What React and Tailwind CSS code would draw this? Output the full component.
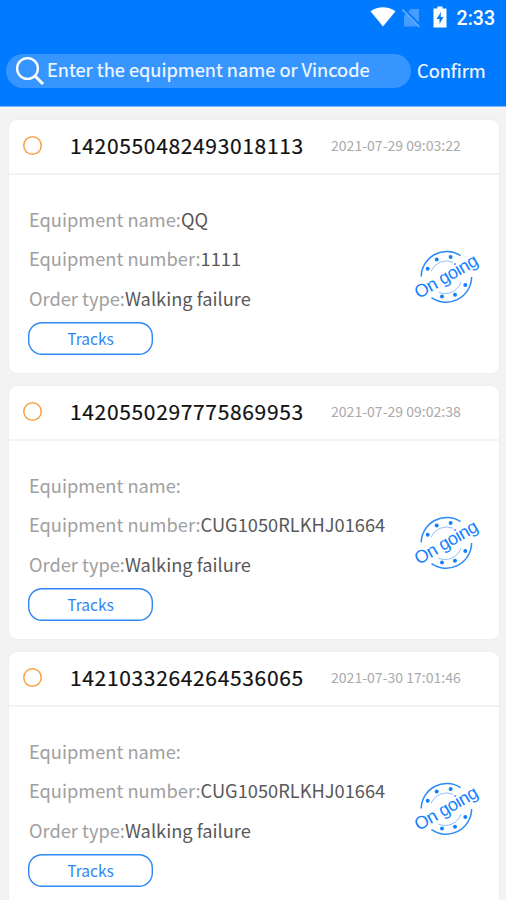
import { useState } from 'react';

const orders = [
  { id: '1420550482493018113', time: '2021-07-29 09:03:22', name: 'QQ', number: '1111', type: 'Walking failure' },
  { id: '1420550297775869953', time: '2021-07-29 09:02:38', name: '', number: 'CUG1050RLKHJ01664', type: 'Walking failure' },
  { id: '1421033264264536065', time: '2021-07-30 17:01:46', name: '', number: 'CUG1050RLKHJ01664', type: 'Walking failure' },
];

function StatusBar() {
  return (
    <div className="flex h-[36px] items-center justify-end pr-[11px] text-white">
      <svg className="-mt-[2px] h-[20px] w-[26px]" viewBox="0 0 26 20">
        <path d="M0.5 4.2C8 -1 18 -1 25.5 4.2L13 19.5Z" fill="white" />
      </svg>
      <svg className="-mt-[1px] ml-[6px] h-[20px] w-[19px]" viewBox="0 0 19 20">
        <path d="M9 1H17V18.5H2V8Z" fill="#479cff" />
        <path d="M1.5 0.5L19 18" stroke="#007aff" strokeWidth="2" />
        <path d="M0.5 1.5L17.5 19" stroke="#64abff" strokeWidth="1.6" />
      </svg>
      <svg className="-mt-[2px] ml-[12px] h-[22px] w-[14px]" viewBox="0 0 14 22">
        <path d="M4.5 0.5H9.5V2.5H13.5V21.5H0.5V2.5H4.5Z" fill="white" />
        <path d="M8 6L3.5 13H6.5V18L10.5 11H7.7Z" fill="#007aff" />
      </svg>
      <span className="mt-[1px] ml-[10px] font-[Roboto] text-[19.5px] leading-none font-medium">2:33</span>
    </div>
  );
}

function SearchBar() {
  return (
    <div className="flex h-[70px] items-start pt-[18px] pl-[6px] text-[#f2f8ff]">
      <div className="flex h-[34px] w-[405px] shrink-0 items-center rounded-full bg-[#3795ff]">
        <svg className="ml-[9px] h-[30px] w-[30px] shrink-0" viewBox="0 0 30 30" fill="none" stroke="white">
          <circle cx="12.5" cy="12.5" r="10.4" strokeWidth="2.3" />
          <path d="M20 20L28 28" strokeWidth="3" />
        </svg>
        <span className="-mt-[4px] ml-[2px] text-[18.25px] leading-[34px] whitespace-nowrap [-webkit-text-stroke:0.2px]">
          Enter the equipment name or Vincode
        </span>
      </div>
      <span className="-mt-[1px] ml-[6px] text-[18.25px] leading-[34px] [-webkit-text-stroke:0.2px]">Confirm</span>
    </div>
  );
}

function Stamp() {
  return (
    <svg className="h-[65px] w-[76px]" viewBox="410 245 76 65" fill="none" stroke="#2b8af5">
      <path d="M421.2 276.5A25.5 25.5 0 0 1 460.5 255.6" strokeWidth="1.5" />
      <path d="M471.6 277A25.5 25.5 0 0 1 431.5 297.6" strokeWidth="1.5" />
      <path d="M431 271.2A17 17 0 0 1 453 262.2" strokeWidth="0.9" opacity="0.6" />
      <path d="M461 282.2A17 17 0 0 1 438.5 292.2" strokeWidth="0.9" opacity="0.6" />
      <g fill="#147fff" stroke="none">
        <circle cx="427.7" cy="268.8" r="2" />
        <circle cx="436.7" cy="259.5" r="2" />
        <circle cx="450.6" cy="257" r="2" />
        <circle cx="465.3" cy="285" r="2" />
        <circle cx="455" cy="294.8" r="2" />
        <circle cx="442" cy="296.5" r="2" />
      </g>
      <text
        x="446.5"
        y="282"
        textAnchor="middle"
        textLength="70"
        transform="rotate(-30 447 277)"
        className="font-['Liberation_Sans'] text-[18px]"
        fill="#147fff"
        stroke="none"
      >
        On going
      </text>
    </svg>
  );
}

function Field({ label, value }) {
  return (
    <div className="h-[39.3px] text-[18.25px] leading-[39px] whitespace-nowrap">
      <span className="text-[#a0a0a0]">{label}:</span>
      <span className="text-[#585858]">{value}</span>
    </div>
  );
}

function OrderCard({ order, selected, onSelect }) {
  return (
    <div className="h-[253px] shrink-0 rounded-[8px] bg-white shadow-[0_0_3px_rgba(0,0,0,0.05)]">
      <div className="flex h-[55px] items-center border-b-2 border-[#f3f3f3] pl-[14px] whitespace-nowrap">
        <button
          onClick={onSelect}
          className={`-mt-[2px] h-[19px] w-[19px] shrink-0 rounded-full shadow-[inset_0_0_0_1.5px_#f7a145] ${selected ? 'bg-[#f7a145]' : ''}`}
        />
        <span className="-mt-[2px] ml-[28px] w-[261px] text-[21px] leading-[53px] tracking-[0.65px] text-[#111] [-webkit-text-stroke:0.2px]">
          {order.id}
        </span>
        <span className="-mt-[2px] text-[14.05px] leading-[53px] text-[#aaa]">{order.time}</span>
      </div>
      <div className="flex justify-between pt-[25px] pr-[13px] pl-[20px]">
        <div>
          <Field label="Equipment name" value={order.name} />
          <Field label="Equipment number" value={order.number} />
          <Field label="Order type" value={order.type} />
          <button className="mt-[4px] -ml-[1px] block h-[33px] w-[125px] rounded-[14px] text-[15.5px] leading-[33px] text-[#2f87f5] shadow-[inset_0_0_0_1.4px_#2f87f5]">
            Tracks
          </button>
        </div>
        <div className="pt-[45px]">
          <Stamp />
        </div>
      </div>
    </div>
  );
}

export default function App() {
  const [selected, setSelected] = useState(null);

  return (
    <div className="flex h-[900px] w-[506px] flex-col overflow-hidden bg-[#f3f3f3] font-['Noto_Sans_CJK_SC',sans-serif]">
      <header className="h-[107px] shrink-0 border-b border-[#7fb9fb] bg-[#007aff]">
        <StatusBar />
        <SearchBar />
      </header>
      <main className="flex flex-col gap-[13px] pt-[13px] pr-[7px] pl-[9px]">
        {orders.map((order) => (
          <OrderCard
            key={order.id}
            order={order}
            selected={selected === order.id}
            onSelect={() => setSelected(order.id)}
          />
        ))}
      </main>
    </div>
  );
}
